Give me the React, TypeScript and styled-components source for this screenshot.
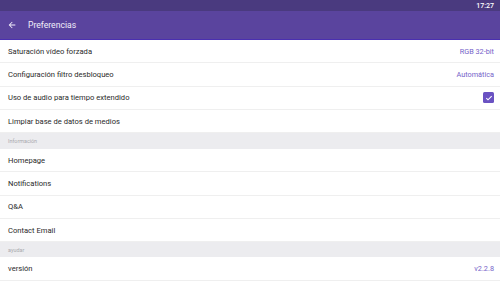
import React from "react";
import styled, { createGlobalStyle } from "styled-components";

const Global = createGlobalStyle`
  html, body { margin: 0; padding: 0; background: #ffffff; }
  body { font-family: Roboto, "Noto Sans", sans-serif; -webkit-font-smoothing: antialiased; }
  * { box-sizing: border-box; }
`;

const Screen = styled.div`
  width: 500px;
  height: 281px;
  overflow: hidden;
  display: flex;
  flex-direction: column;
  background: #ffffff;
`;

const StatusBar = styled.div`
  height: 11px;
  background: #4a3a7f;
  display: flex;
  justify-content: flex-end;
  align-items: center;
  padding-right: 6px;
  color: #ffffff;
  font-size: 7px;
  font-weight: 500;
  flex-shrink: 0;
`;

const Toolbar = styled.div`
  height: 29px;
  background: #5a449e;
  border-bottom: 1px solid #4a2fb0;
  display: flex;
  align-items: center;
  padding-left: 7px;
  gap: 11px;
  color: #f1eefa;
  font-size: 8.6px;
  flex-shrink: 0;
`;

const List = styled.div`
  display: flex;
  flex-direction: column;
`;

const Row = styled.div`
  height: 23.3px;
  display: flex;
  align-items: center;
  justify-content: space-between;
  padding: 0 6px 0 8px;
  border-bottom: 1px solid #efefef;
  flex-shrink: 0;
`;

const Label = styled.span`
  font-size: 7.6px;
  color: #2a2a2a;
`;

const Value = styled.span`
  font-size: 7.3px;
  color: #7563c9;
`;

const Header = styled.div<{ $h: number }>`
  height: ${(p) => p.$h}px;
  background: #ececef;
  display: flex;
  align-items: center;
  padding-left: 8px;
  font-size: 5.4px;
  color: #a9a9ae;
  flex-shrink: 0;
`;

const Check = styled.span`
  width: 11px;
  height: 11px;
  border-radius: 1.5px;
  background: #6a52c2;
  display: inline-flex;
  align-items: center;
  justify-content: center;
`;

const BackArrow = () => (
  <svg width="10" height="10" viewBox="0 0 24 24">
    <path d="M20 11H7.83l5.59-5.59L12 4l-8 8 8 8 1.41-1.41L7.83 13H20v-2z" fill="#f3f0fb" />
  </svg>
);

export default function App() {
  return (
    <Screen>
      <Global />
      <StatusBar>17:27</StatusBar>
      <Toolbar>
        <BackArrow />
        <span>Preferencias</span>
      </Toolbar>
      <List>
        <Row>
          <Label>Saturación vídeo forzada</Label>
          <Value>RGB 32-bit</Value>
        </Row>
        <Row>
          <Label>Configuración filtro desbloqueo</Label>
          <Value>Automática</Value>
        </Row>
        <Row>
          <Label>Uso de audio para tiempo extendido</Label>
          <Check>
            <svg width="8" height="8" viewBox="0 0 24 24">
              <path d="M4 12.5l5 5L20 6.5" stroke="#ffffff" strokeWidth="3.2" fill="none" />
            </svg>
          </Check>
        </Row>
        <Row>
          <Label>Limpiar base de datos de medios</Label>
        </Row>
        <Header $h={16}>Información</Header>
        <Row>
          <Label>Homepage</Label>
        </Row>
        <Row>
          <Label>Notifications</Label>
        </Row>
        <Row>
          <Label>Q&amp;A</Label>
        </Row>
        <Row>
          <Label>Contact Email</Label>
        </Row>
        <Header $h={15}>ayudar</Header>
        <Row>
          <Label>versión</Label>
          <Value>v2.2.8</Value>
        </Row>
      </List>
    </Screen>
  );
}
